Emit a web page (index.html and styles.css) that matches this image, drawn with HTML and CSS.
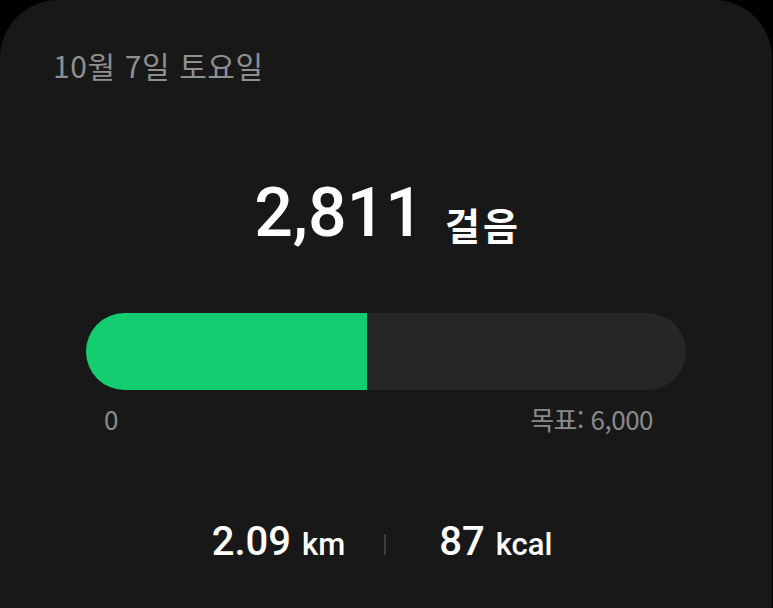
FILE: index.html
```html
<!DOCTYPE html>
<html lang="ko">
<head>
  <meta charset="UTF-8" />
  <meta name="viewport" content="width=device-width, initial-scale=1.0" />
  <title>걸음 수</title>
  <link rel="stylesheet" href="styles.css">
</head>
<body>
  <main class="card">
    <p class="date">10월 7일 토요일</p>

    <div class="steps">
      <span class="steps-count">2,811</span>
      <span class="steps-unit">걸음</span>
    </div>

    <div class="progress">
      <div class="progress-fill" style="width: 46.85%"></div>
    </div>
    <div class="progress-labels">
      <span>0</span>
      <span>목표: 6,000</span>
    </div>

    <div class="stats">
      <div class="stat"><span class="stat-value">2.09</span><span class="stat-unit">km</span></div>
      <span class="stat-divider"></span>
      <div class="stat"><span class="stat-value">87</span><span class="stat-unit">kcal</span></div>
    </div>
  </main>
</body>
</html>
```

FILE: styles.css
```css
html, body {
  margin: 0;
  height: 100%;
}
body {
  background-color: #000;
  font-family: Roboto, "Noto Sans CJK KR", sans-serif;
  color: #fff;
}
.card {
  box-sizing: border-box;
  width: 772px;
  height: 608px;
  background-color: #181818;
  border-radius: 58px 58px 0 0;
  padding: 44px 86px 0 86px;
}
.date {
  margin: 0 0 0 -33px;
  font-family: "Noto Sans CJK KR", sans-serif;
  font-size: 30px;
  letter-spacing: 0.6px;
  color: #8f8f8f;
  line-height: 42px;
}
.steps {
  margin-top: 87px;
  height: 80px;
  line-height: 80px;
  text-align: center;
  white-space: nowrap;
}
.steps-count {
  font-size: 68px;
  font-weight: 500;
}
.steps-unit {
  margin-left: 17px;
  margin-right: -3px;
  font-family: "Noto Sans CJK KR", sans-serif;
  font-size: 38px;
  font-weight: 700;
  letter-spacing: 3px;
  vertical-align: -4px;
}
.progress {
  margin-top: 60px;
  height: 77px;
  border-radius: 38.5px;
  background-color: #262626;
  overflow: hidden;
}
.progress-fill {
  height: 100%;
  background-color: #14cd70;
}
.progress-labels {
  display: flex;
  justify-content: space-between;
  padding: 0 33px 0 18px;
  margin-top: 12px;
  font-family: "Noto Sans CJK KR", sans-serif;
  font-size: 26px;
  letter-spacing: -0.5px;
  color: #8a8a8a;
  line-height: 34px;
}
.stats {
  display: flex;
  justify-content: center;
  align-items: center;
  margin-top: 82px;
  padding-right: 8px;
}
.stat {
  display: flex;
  align-items: baseline;
  gap: 11px;
}
.stat-value {
  font-size: 40px;
  font-weight: 500;
}
.stat-unit {
  font-size: 31px;
  font-weight: 500;
}
.stat-divider {
  width: 2px;
  height: 21px;
  margin: 6px 53px 0 39px;
  background-color: #3c3c3c;
}
```
